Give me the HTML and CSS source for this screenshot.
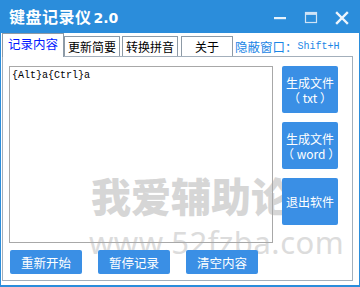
FILE: index.html
```html
<!DOCTYPE html>
<html>
<head>
<meta charset="utf-8">
<link rel="stylesheet" href="styles.css">
</head>
<body>
<div class="win">
  <div class="titlebar">
    <div class="title">键盘记录仪<span class="ver">2.0</span></div>
    <div class="ctrls">
      <svg class="ic" width="14" height="14" viewBox="0 0 14 14"><rect x="1" y="6" width="12" height="2.2" fill="#e8f2fb"/></svg>
      <svg class="ic" width="14" height="14" viewBox="0 0 14 14"><rect x="1.5" y="1.5" width="11" height="10" fill="none" stroke="#cfe3f6" stroke-width="1.2"/><rect x="1.5" y="1.5" width="11" height="2.4" fill="#cfe3f6"/></svg>
      <svg class="ic" width="14" height="14" viewBox="0 0 14 14"><path d="M2 2L12 12M12 2L2 12" stroke="#eef5fc" stroke-width="2.4" stroke-linecap="square"/></svg>
    </div>
  </div>
  <div class="tabsrow">
    <div class="tab sel w1">记录内容</div>
    <div class="tab w2">更新简要</div>
    <div class="tab w3">转换拼音</div>
    <div class="tab w4">关于</div>
    <div class="hint">隐蔽窗口：<span class="mono">Shift+H</span></div>
  </div>
  <div class="panel">
    <div class="toprow">
      <div class="log">{Alt}a{Ctrl}a</div>
      <div class="sidebtns">
        <div class="btn side">生成文件<br>（ txt ）</div>
        <div class="btn side">生成文件<br>（ word ）</div>
        <div class="btn side">退出软件</div>
      </div>
    </div>
    <div class="botrow">
      <div class="btn bot">重新开始</div>
      <div class="btn bot">暂停记录</div>
      <div class="btn bot">清空内容</div>
    </div>
  </div>
  <div class="wm1">我爱辅助论坛</div>
  <div class="wm2">www.52fzba.com</div>
</div>
</body>
</html>
```
FILE: styles.css
```css
* { box-sizing: border-box; }
html, body { margin: 0; padding: 0; background: #fff; }
body { width: 360px; height: 287px; overflow: hidden; font-family: "Noto Sans CJK SC", "Noto Sans", sans-serif; }
.win {
  position: relative;
  width: 360px; height: 287px;
  border-left: 1px solid #2b8ddb;
  border-right: 1px solid #2b8ddb;
  border-bottom: 2px solid #2b8ddb;
  background: #fff;
  display: flex; flex-direction: column;
}
.titlebar {
  height: 33px; background: #2b8ddb;
  display: flex; align-items: center; justify-content: space-between;
  padding-left: 9px; padding-right: 11px;
  margin-left: -1px; margin-right: -1px;
}
.title { color: #fff; font-weight: 700; font-size: 16px; letter-spacing: 0.5px; line-height: 20px; }
.ver { font-family: "DejaVu Sans", sans-serif; font-size: 14px; letter-spacing: 0; margin-left: 2px; }
.ctrls { display: flex; align-items: center; gap: 17px; padding-top: 2px; }
.ic { display: block; }
.tabsrow {
  height: 23px; display: flex; align-items: flex-end;
  padding-left: 1px; position: relative; z-index: 2;
}
.tab {
  height: 20px; border: 1px solid #8d9aa6; border-bottom: none;
  font-size: 12px; color: #000; display: flex; align-items: center; justify-content: center;
  background: #fff; line-height: 1;
}
.tab.sel { height: 24px; margin-bottom: -1px; color: #0019ff; font-size: 12.5px; padding-bottom: 3px; }
.w1 { width: 62px; }
.w2 { width: 56px; margin-left: 0; }
.w3 { width: 56px; margin-left: 2px; }
.w4 { width: 52px; margin-left: 3px; }
.hint { color: #1a86e6; font-size: 12.5px; margin-left: 2px; height: 20px; display: flex; align-items: center; }
.mono { font-family: "Liberation Mono", monospace; font-size: 10px; letter-spacing: 0; }
.panel {
  width: 351px; height: 225px; margin-left: 1px;
  border: 1px solid #a3afbb;
  padding: 9px 0 0 6px;
  display: flex; flex-direction: column;
}
.toprow { display: flex; gap: 9px; }
.log {
  width: 264px; height: 177px; border: 1px solid #a8a8a8;
  font-family: "Liberation Mono", monospace; font-size: 10px; color: #000;
  padding: 3px 0 0 2px; line-height: 12px;
  position: relative; z-index: 2;
}
.sidebtns { display: flex; flex-direction: column; gap: 9px; }
.btn {
  background: #3a8fe5; color: #fff; border-radius: 2px;
  display: flex; align-items: center; justify-content: center; text-align: center;
  font-size: 12px; position: relative; z-index: 3;
}
.side { width: 56px; height: 47px; line-height: 15px; }
.botrow { display: flex; gap: 16px; margin-top: 7px; padding-left: 1px; }
.bot { width: 72px; height: 24px; font-size: 12.5px; }
.wm1 {
  position: absolute; left: 90px; top: 170px; z-index: 1;
  font-size: 40px; font-weight: 900; color: #d6d6d6; letter-spacing: 0;
  line-height: 50px; white-space: nowrap;
}
.wm2 {
  position: absolute; left: 88px; top: 222px; z-index: 1;
  font-family: "Noto Sans", sans-serif; font-size: 31px; color: #dcdcdc;
  line-height: 40px; white-space: nowrap; letter-spacing: 0.5px;
}
```
